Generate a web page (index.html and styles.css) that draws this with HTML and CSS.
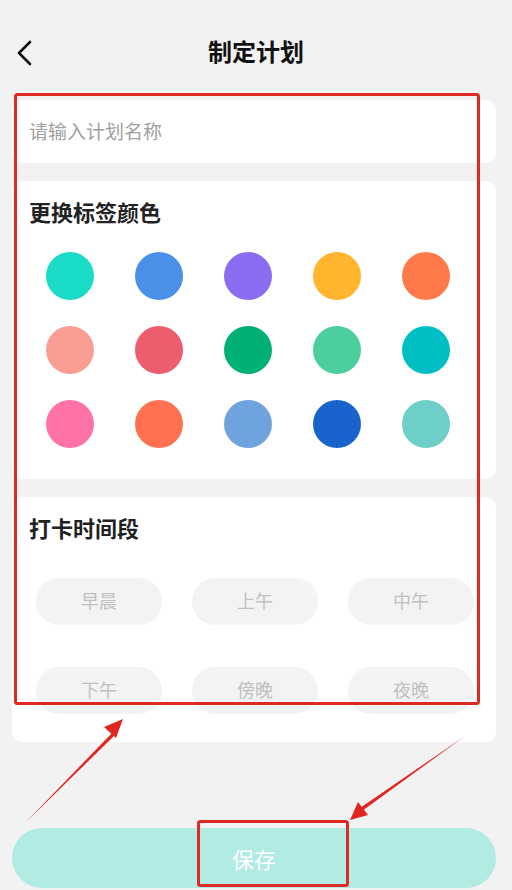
FILE: index.html
```html
<!DOCTYPE html>
<html>
<head>
    <meta charset="utf-8">
    <title>制定计划</title>
    <link rel="stylesheet" href="styles.css">
</head>
<body>
    <div class="page">
        <div class="header">
            <svg class="back" width="18" height="26" viewBox="0 0 18 26">
                <path d="M14 2 L3 13 L14 24" fill="none" stroke="#111" stroke-width="2.6" stroke-linecap="round" stroke-linejoin="round"/>
            </svg>
            <div class="title">制定计划</div>
        </div>

        <div class="card name-card">
            <span class="placeholder">请输入计划名称</span>
        </div>

        <div class="card color-card">
            <h3>更换标签颜色</h3>
            <div class="colors">
                <span class="dot" style="background:#1adbc8"></span>
                <span class="dot" style="background:#4a90e8"></span>
                <span class="dot" style="background:#8a6cf0"></span>
                <span class="dot" style="background:#ffb52e"></span>
                <span class="dot" style="background:#ff7a4b"></span>
                <span class="dot" style="background:#fa9e94"></span>
                <span class="dot" style="background:#ec5e6e"></span>
                <span class="dot" style="background:#00b076"></span>
                <span class="dot" style="background:#4ccf9c"></span>
                <span class="dot" style="background:#00bfc4"></span>
                <span class="dot" style="background:#ff72a6"></span>
                <span class="dot" style="background:#ff7150"></span>
                <span class="dot" style="background:#6fa3dd"></span>
                <span class="dot" style="background:#1a63cc"></span>
                <span class="dot" style="background:#6ecfc9"></span>
            </div>
        </div>

        <div class="card time-card">
            <h3>打卡时间段</h3>
            <div class="slots">
                <span class="slot">早晨</span>
                <span class="slot">上午</span>
                <span class="slot">中午</span>
                <span class="slot">下午</span>
                <span class="slot">傍晚</span>
                <span class="slot">夜晚</span>
            </div>
        </div>

        <button class="save">保存</button>

        <!-- annotation overlay -->
        <svg class="marks" width="512" height="890" viewBox="0 0 512 890">
            <rect x="15.5" y="94.5" width="463" height="609" rx="2" fill="none" stroke="#dd2a22" stroke-width="3"/>
            <rect x="198.5" y="821.5" width="149" height="64" rx="2" fill="none" stroke="#dd2a22" stroke-width="3"/>
            <polygon points="25,823 112,733 114,736" fill="#e0261f"/>
            <polygon points="123,719 104,727 116,738" fill="#e0261f"/>
            <polygon points="465,736 362,811 360,808" fill="#e0261f"/>
            <polygon points="350,820 358,802 368,815" fill="#e0261f"/>
        </svg>
    </div>
</body>
</html>
```

FILE: styles.css
```css
body {
    margin: 0;
    background: #f2f2f2;
    font-family: "Noto Sans CJK SC", "Noto Sans", sans-serif;
}

.page {
    position: relative;
    width: 512px;
    height: 890px;
    overflow: hidden;
}

.header {
    position: relative;
    height: 44px;
    padding-top: 30px;
    display: flex;
    align-items: center;
    justify-content: center;
}

.back {
    position: absolute;
    left: 16px;
    top: 40px;
}

.title {
    font-size: 24px;
    font-weight: bold;
    color: #111;
    margin-top: -4px;
}

.card {
    background: #fff;
    border-radius: 10px;
    margin: 0 16px 0 12px;
    box-sizing: border-box;
}

.card h3 {
    margin: 0;
    font-size: 22px;
    line-height: 28px;
    font-weight: bold;
    color: #222;
}

.name-card {
    margin-top: 26px;
    height: 63px;
    padding-left: 17px;
    display: flex;
    align-items: center;
}

.placeholder {
    font-size: 19px;
    color: #a0a0a0;
    margin-top: -2px;
}

.color-card {
    margin-top: 18px;
    height: 298px;
    padding: 16px 0 0 17px;
}

.colors {
    display: grid;
    grid-template-columns: repeat(5, 48px);
    column-gap: 41px;
    row-gap: 26px;
    margin: 27px 0 0 17px;
}

.dot {
    width: 48px;
    height: 48px;
    border-radius: 50%;
}

.time-card {
    margin-top: 18px;
    height: 245px;
    padding: 16px 0 0 17px;
}

.slots {
    display: grid;
    grid-template-columns: repeat(3, 126px);
    column-gap: 30px;
    row-gap: 42px;
    margin: 37px 0 0 7px;
}

.slot {
    height: 47px;
    border-radius: 24px;
    background: #f3f3f3;
    color: #c0c0c0;
    font-size: 18px;
    line-height: 1;
    padding-bottom: 4px;
    box-sizing: border-box;
    display: flex;
    align-items: center;
    justify-content: center;
}

.save {
    display: block;
    margin: 86px 16px 0 12px;
    width: 484px;
    height: 60px;
    border: none;
    border-radius: 30px;
    background: #b2ebe4;
    color: #fff;
    font-family: "Noto Sans CJK SC", sans-serif;
    font-size: 22px;
}

.marks {
    position: absolute;
    left: 0;
    top: 0;
    pointer-events: none;
}
```
